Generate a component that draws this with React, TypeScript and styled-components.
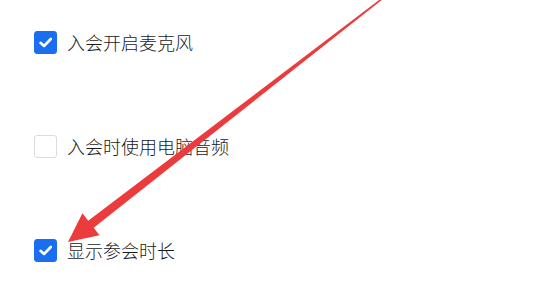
import React from 'react';
import styled, { createGlobalStyle } from 'styled-components';

const GlobalStyle = createGlobalStyle`
  html, body {
    margin: 0;
    padding: 0;
    background: #fff;
  }
  body {
    font-family: "Liberation Sans", "Noto Sans CJK SC", sans-serif;
  }
`;

const Page = styled.div`
  position: relative;
  width: 550px;
  height: 299px;
  overflow: hidden;
  background: #fff;
`;

const OptionList = styled.div`
  display: flex;
  flex-direction: column;
  gap: 80px;
  padding: 30px 0 0 34px;
`;

const OptionRow = styled.label`
  display: flex;
  align-items: center;
  gap: 10px;
  height: 24px;
`;

const Box = styled.span<{ checked?: boolean }>`
  display: flex;
  align-items: center;
  justify-content: center;
  box-sizing: border-box;
  width: 23px;
  height: 23px;
  border-radius: 3px;
  background: ${props => (props.checked ? '#1a6ff0' : '#fff')};
  border: 1px solid ${props => (props.checked ? '#1a6ff0' : '#dcdcdc')};
`;

const Label = styled.span`
  font-family: "Noto Sans CJK SC", "Microsoft YaHei", sans-serif;
  font-size: 18px;
  font-weight: 300;
  line-height: 24px;
  color: #1a1a1a;
`;

const Overlay = styled.svg`
  position: absolute;
  left: 0;
  top: 0;
  pointer-events: none;
`;

const options = [
  { id: 'mic', text: '入会开启麦克风', checked: true },
  { id: 'audio', text: '入会时使用电脑音频', checked: false },
  { id: 'duration', text: '显示参会时长', checked: true },
];

const CheckMark = () => (
  <svg width="15" height="15" viewBox="0 0 15 15">
    <path
      d="M2.5 7.8 L6 11 L12.8 4"
      fill="none"
      stroke="#fff"
      strokeWidth="2.6"
      strokeLinecap="round"
      strokeLinejoin="round"
    />
  </svg>
);

// tapered red arrow pointing at the last option
const Arrow = () => {
  const tail = { x: 383, y: -2 };
  const tip = { x: 68, y: 242 };
  const dx = tip.x - tail.x;
  const dy = tip.y - tail.y;
  const len = Math.sqrt(dx * dx + dy * dy);
  const ux = dx / len;
  const uy = dy / len;
  const nx = -uy;
  const ny = ux;
  const headLen = 29;
  const headHalf = 14;
  const backX = tip.x - ux * headLen;
  const backY = tip.y - uy * headLen;
  const tailHalf = 0.8;
  const neckHalf = 4.5;
  const pts = [
    [tail.x + nx * tailHalf, tail.y + ny * tailHalf],
    [backX + nx * neckHalf, backY + ny * neckHalf],
    [backX + nx * headHalf, backY + ny * headHalf],
    [tip.x, tip.y],
    [backX - nx * headHalf, backY - ny * headHalf],
    [backX - nx * neckHalf, backY - ny * neckHalf],
    [tail.x - nx * tailHalf, tail.y - ny * tailHalf],
  ]
    .map(p => p.map(v => v.toFixed(1)).join(','))
    .join(' ');

  return (
    <Overlay width="550" height="299" viewBox="0 0 550 299">
      <polygon points={pts} fill="#ec3b3d" />
    </Overlay>
  );
};

const App: React.FC = () => (
  <>
    <GlobalStyle />
    <Page>
      <OptionList>
        {options.map(option => (
          <OptionRow key={option.id}>
            <Box checked={option.checked}>
              {option.checked && <CheckMark />}
            </Box>
            <Label>{option.text}</Label>
          </OptionRow>
        ))}
      </OptionList>
      <Arrow />
    </Page>
  </>
);

export default App;
